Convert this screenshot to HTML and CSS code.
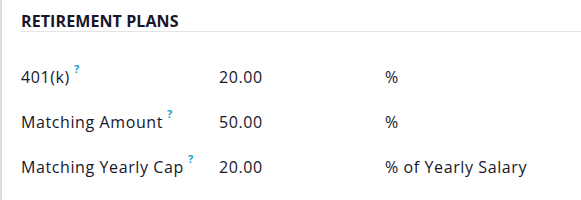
FILE: index.html
```html
<!DOCTYPE html>
<html>
<head>
<meta charset="utf-8">
<link rel="stylesheet" href="styles.css">
</head>
<body>
<div class="sheet">
  <div class="section">
    <div class="title">RETIREMENT PLANS</div>
    <div class="grid">
      <div class="label">401(k)<sup class="help">?</sup></div>
      <div class="value">20.00</div>
      <div class="unit">%</div>
      <div class="label">Matching Amount<sup class="help">?</sup></div>
      <div class="value">50.00</div>
      <div class="unit">%</div>
      <div class="label">Matching Yearly Cap<sup class="help">?</sup></div>
      <div class="value">20.00</div>
      <div class="unit">% of Yearly Salary</div>
    </div>
  </div>
</div>
</body>
</html>
```
FILE: styles.css
```css
html, body {
  margin: 0;
  padding: 0;
  background: #fff;
}
body {
  font-family: "Open Sans", "Noto Sans", sans-serif;
  color: #17172a;
  font-size: 16px;
}
.sheet {
  border-left: 2px solid #dcdcdc;
  height: 200px;
  box-sizing: border-box;
}
.section {
  padding-left: 19px;
}
.title {
  font-weight: 700;
  font-size: 16px;
  line-height: 20px;
  padding-top: 11px;
  border-bottom: 1px solid #e3e3e3;
  letter-spacing: 0.1px;
}
.grid {
  display: grid;
  grid-template-columns: 198px 166px auto;
  row-gap: 25px;
  margin-top: 35px;
  line-height: 20px;
  letter-spacing: 0.6px;
}
.label {
  font-weight: 500;
}
.help {
  color: #1a9fd0;
  font-size: 11px;
  font-weight: 700;
  margin-left: 4px;
  vertical-align: top;
  line-height: 12px;
  position: relative;
  top: -4px;
}
```
